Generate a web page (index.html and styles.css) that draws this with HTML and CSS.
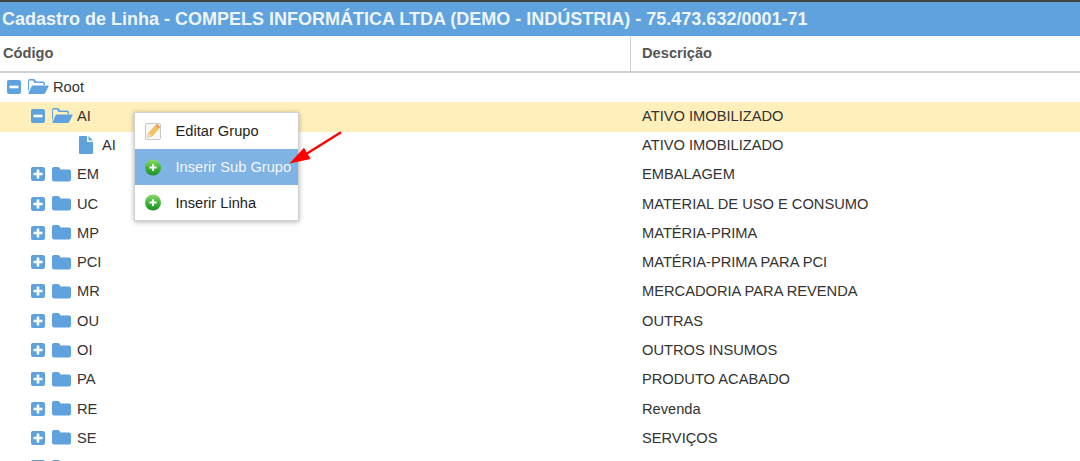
FILE: index.html
```html
<!DOCTYPE html>
<html lang="pt-BR">
<head>
    <meta charset="UTF-8">
    <title>Cadastro de Linha</title>
    <link rel="stylesheet" href="styles.css">
</head>
<body>
    <svg class="defs" width="0" height="0">
        <defs>
            <linearGradient id="green" x1="0" y1="0" x2="0" y2="1">
                <stop offset="0" stop-color="#8fdc6a"/>
                <stop offset=".5" stop-color="#3fb83a"/>
                <stop offset="1" stop-color="#1f8f2a"/>
            </linearGradient>
        </defs>
        <symbol id="folder" viewBox="0 0 19 15">
            <path d="M0 2q0-2 2-2h4q1.500 0 2 1.500l.4 1h8.600q2 0 2 2v8q0 2-2 2h-15q-2 0-2-2z"/>
        </symbol>
        <symbol id="open" viewBox="0 0 21 15">
            <path fill-rule="evenodd" d="M0 2q0-2 2-2h3.500q1.500 0 2 1.500l.3 1h7.200q2 0 2 2v1.500h-1.500v-1.500q0-.5-.5-.5h-8.800l-.6-2q-.2-.5-.7-.5h-3.400q-.5 0-.5.5v8l-1 3z"/>
            <path d="M4.800 6.500h15.200q1 0 .5 1l-3.200 6.300q-.5 1.200-1.700 1.200h-14.600q-1 0-.5-1l3-6.500q.4-1 1.300-1z"/>
        </symbol>
        <symbol id="file" viewBox="0 0 14 18">
            <path d="M1 0h7v5q0 1 1 1h5v11q0 1-1 1h-12q-1 0-1-1v-16q0-1 1-1zM9.500 0l4.500 4.500h-4.500z"/>
        </symbol>
        <symbol id="plus" viewBox="0 0 14 14">
            <rect width="14" height="14" rx="2"/>
            <path class="glyph" d="M5.700 2.500h2.600v3.200h3.200v2.600h-3.200v3.200h-2.600v-3.200h-3.200v-2.600h3.200z"/>
        </symbol>
        <symbol id="minus" viewBox="0 0 14 14">
            <rect width="14" height="14" rx="2"/>
            <rect class="glyph" x="2.500" y="5.700" width="9" height="2.600"/>
        </symbol>
        <symbol id="add" viewBox="0 0 16 16">
            <circle cx="8" cy="8" r="8" fill="url(#green)"/>
            <path fill="#fff" d="M7 4.500h2v2.500h2.500v2h-2.500v2.500h-2v-2.500h-2.500v-2h2.500z"/>
        </symbol>
    </svg>

    <div class="title">Cadastro de Linha - COMPELS INFORMÁTICA LTDA (DEMO - INDÚSTRIA) - 75.473.632/0001-71</div>

    <div class="grid-head">
        <div class="col-code">Código</div>
        <div class="col-desc">Descrição</div>
    </div>

    <div class="tree">
        <div class="row">
            <div class="cell-code"><svg class="toggle"><use href="#minus"/></svg><svg class="ico-open"><use href="#open"/></svg><span>Root</span></div>
            <div class="cell-desc"></div>
        </div>
        <div class="row selected">
            <div class="cell-code level-1"><svg class="toggle"><use href="#minus"/></svg><svg class="ico-open"><use href="#open"/></svg><span>AI</span></div>
            <div class="cell-desc">ATIVO IMOBILIZADO</div>
        </div>
        <div class="row">
            <div class="cell-code level-2"><svg class="ico-file"><use href="#file"/></svg><span>AI</span></div>
            <div class="cell-desc">ATIVO IMOBILIZADO</div>
        </div>
        <div class="row">
            <div class="cell-code level-1"><svg class="toggle"><use href="#plus"/></svg><svg class="ico-folder"><use href="#folder"/></svg><span>EM</span></div>
            <div class="cell-desc">EMBALAGEM</div>
        </div>
        <div class="row">
            <div class="cell-code level-1"><svg class="toggle"><use href="#plus"/></svg><svg class="ico-folder"><use href="#folder"/></svg><span>UC</span></div>
            <div class="cell-desc">MATERIAL DE USO E CONSUMO</div>
        </div>
        <div class="row">
            <div class="cell-code level-1"><svg class="toggle"><use href="#plus"/></svg><svg class="ico-folder"><use href="#folder"/></svg><span>MP</span></div>
            <div class="cell-desc">MATÉRIA-PRIMA</div>
        </div>
        <div class="row">
            <div class="cell-code level-1"><svg class="toggle"><use href="#plus"/></svg><svg class="ico-folder"><use href="#folder"/></svg><span>PCI</span></div>
            <div class="cell-desc">MATÉRIA-PRIMA PARA PCI</div>
        </div>
        <div class="row">
            <div class="cell-code level-1"><svg class="toggle"><use href="#plus"/></svg><svg class="ico-folder"><use href="#folder"/></svg><span>MR</span></div>
            <div class="cell-desc">MERCADORIA PARA REVENDA</div>
        </div>
        <div class="row">
            <div class="cell-code level-1"><svg class="toggle"><use href="#plus"/></svg><svg class="ico-folder"><use href="#folder"/></svg><span>OU</span></div>
            <div class="cell-desc">OUTRAS</div>
        </div>
        <div class="row">
            <div class="cell-code level-1"><svg class="toggle"><use href="#plus"/></svg><svg class="ico-folder"><use href="#folder"/></svg><span>OI</span></div>
            <div class="cell-desc">OUTROS INSUMOS</div>
        </div>
        <div class="row">
            <div class="cell-code level-1"><svg class="toggle"><use href="#plus"/></svg><svg class="ico-folder"><use href="#folder"/></svg><span>PA</span></div>
            <div class="cell-desc">PRODUTO ACABADO</div>
        </div>
        <div class="row">
            <div class="cell-code level-1"><svg class="toggle"><use href="#plus"/></svg><svg class="ico-folder"><use href="#folder"/></svg><span>RE</span></div>
            <div class="cell-desc">Revenda</div>
        </div>
        <div class="row">
            <div class="cell-code level-1"><svg class="toggle"><use href="#plus"/></svg><svg class="ico-folder"><use href="#folder"/></svg><span>SE</span></div>
            <div class="cell-desc">SERVIÇOS</div>
        </div>
        <div class="row">
            <div class="cell-code level-1"><svg class="toggle"><use href="#plus"/></svg><svg class="ico-folder"><use href="#folder"/></svg></div>
            <div class="cell-desc"></div>
        </div>
    </div>

    <!-- menu de contexto aberto sobre a arvore -->
    <div class="menu">
        <div class="menu-item">
            <svg class="menu-ico" viewBox="0 0 16 17">
                <rect x=".5" y=".5" width="15" height="16" rx="1.500" fill="#f8f8f8" stroke="#c8c8c8"/>
                <path d="M2.500 14.500l1.200-4.500 7.800-8.500 3.300 3-7.800 8.500z" fill="#f3c75f" stroke="#d9a23e" stroke-width=".6"/>
                <path d="M10.500 2.600l1-1.100q.6-.6 1.300 0l1.700 1.500q.6.6 0 1.300l-1 1.100z" fill="#e89a5a"/>
                <path d="M2.500 14.500l1.200-4.500 3.300 3z" fill="#f3dfb5"/>
            </svg>
            <span>Editar Grupo</span>
        </div>
        <div class="menu-item active">
            <svg class="menu-ico"><use href="#add"/></svg>
            <span>Inserir Sub Grupo</span>
        </div>
        <div class="menu-item short">
            <svg class="menu-ico"><use href="#add"/></svg>
            <span>Inserir Linha</span>
        </div>
    </div>

    <svg class="arrow" viewBox="0 0 56 36" width="56" height="36">
        <path d="M55 1.300L21 22.500" stroke="#f00" stroke-width="2.500" fill="none"/>
        <path d="M3.500 32.500L18 16.700L24.700 28z" fill="#f00"/>
    </svg>
</body>
</html>
```

FILE: styles.css
```css
* {
    margin: 0;
    padding: 0;
    box-sizing: border-box;
}

body {
    height: 461px;
    overflow: hidden;
    position: relative;
    background-color: #fff;
    color: #333;
    font-family: "Liberation Sans", Arial, sans-serif;
    font-size: 14.667px;
}

.defs {
    position: absolute;
}

/* Barra de titulo */
.title {
    height: 36px;
    padding-left: 2px;
    border-top: 2px solid #444;
    background-color: #5fa2dd;
    color: #eef5fc;
    font-size: 18px;
    font-weight: bold;
    line-height: 34px;
    white-space: nowrap;
}

/* Cabecalho da grade */
.grid-head {
    display: flex;
    height: 37px;
    border-bottom: 2px solid #d0d0d0;
    color: #555;
    font-weight: bold;
    line-height: 34px;
}

.col-code {
    width: 631px;
    padding-left: 3px;
    border-right: 1px solid #d0d0d0;
}

.col-desc {
    padding-left: 11px;
}

/* Linhas da arvore */
.row {
    display: flex;
    height: 29.27px;
    padding-bottom: 2px;
    align-items: center;
}

.row.selected {
    background-color: #ffefbb;
}

.cell-code {
    display: flex;
    align-items: center;
    width: 642px;
    padding-left: 7px;
}

.cell-code.level-1 {
    padding-left: 31px;
}

.cell-code.level-2 {
    padding-left: 79px;
}

.cell-desc {
    white-space: nowrap;
}

.toggle {
    width: 14px;
    height: 14px;
    margin-right: 7px;
    fill: #5fa2dd;
}

.glyph {
    fill: #fff;
}

.ico-open {
    width: 21px;
    height: 15px;
    margin-right: 4px;
    fill: #5fa2dd;
}

.ico-folder {
    width: 19px;
    height: 15px;
    margin-right: 6px;
    fill: #5fa2dd;
}

.ico-file {
    width: 14px;
    height: 18px;
    margin-right: 9px;
    fill: #5fa2dd;
}

/* Menu de contexto */
.menu {
    position: absolute;
    left: 134px;
    top: 112px;
    width: 165px;
    border: 1px solid #d0d0d0;
    background-color: #fff;
    box-shadow: 0 1px 5px rgba(0, 0, 0, 0.3);
}

.menu-item {
    display: flex;
    align-items: center;
    height: 36px;
    padding-left: 10px;
    color: #222;
    white-space: nowrap;
}

.menu-item.short {
    height: 35px;
}

.menu-item.active {
    background-color: #7eb3e3;
    color: #f2f7fc;
}

.menu-ico {
    width: 16px;
    height: 17px;
    margin-right: 14.5px;
    flex-shrink: 0;
}

.arrow {
    position: absolute;
    left: 286px;
    top: 131px;
}
```
